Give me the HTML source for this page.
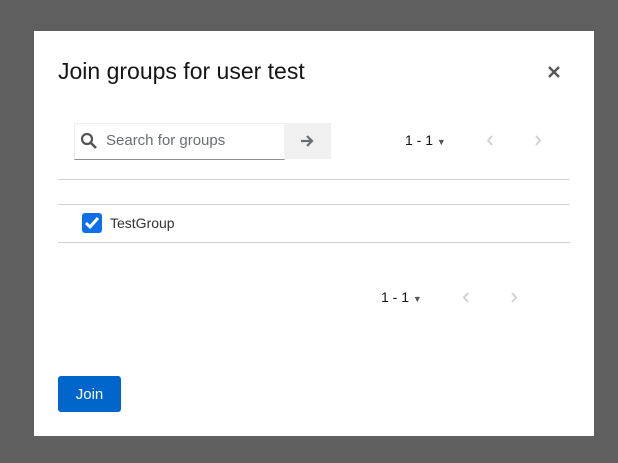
<!DOCTYPE html><html><head><style>
body{margin:0;width:618px;height:463px;background:#5f5f5f;font-family:"Liberation Sans",sans-serif;position:relative;overflow:hidden}
.m{position:absolute;left:34px;top:31px;width:560px;height:405px;background:#fff}
.a{position:absolute}
</style></head><body><div class="m">
<div class="a" style="left:24px;top:27px;font-size:23px;color:#151515">Join groups for user test</div>
<svg class="a" style="left:514px;top:35px" width="12" height="12" viewBox="0 0 12 12"><path d="M1 1l10 10M11 1L1 11" stroke="#555" stroke-width="2.4"/></svg>
<div class="a" style="left:40px;top:92px;width:209px;height:35px;border:1px solid #eee;border-bottom:1px solid #8a8d90"></div>
<svg class="a" style="left:46px;top:101px" width="18" height="18" viewBox="0 0 18 18"><circle cx="7" cy="7" r="5" fill="none" stroke="#555" stroke-width="2.2"/><path d="M11 11l5 5" stroke="#555" stroke-width="2.6"/></svg>
<div class="a" style="left:72px;top:101px;font-size:15px;color:#6a6e73">Search for groups</div>
<div class="a" style="left:250px;top:92px;width:47px;height:36px;background:#f0f0f0"></div>
<svg class="a" style="left:265px;top:102px" width="16" height="16" viewBox="0 0 16 16"><path d="M2 8h11M8 3l5 5-5 5" fill="none" stroke="#6a6e73" stroke-width="2.2"/></svg>
<div class="a" style="left:371px;top:101px;font-size:14px;color:#151515">1 - 1 <span style="font-size:9px;color:#555">▼</span></div>
<svg class="a" style="left:452px;top:104px" width="8" height="11" viewBox="0 0 8 11"><path d="M6 1L2 5.5 6 10" fill="none" stroke="#d2d2d2" stroke-width="2"/></svg>
<svg class="a" style="left:500px;top:104px" width="8" height="11" viewBox="0 0 8 11"><path d="M2 1l4 4.5L2 10" fill="none" stroke="#d2d2d2" stroke-width="2"/></svg>
<div class="a" style="left:24px;top:148px;width:512px;height:1px;background:#d2d2d2"></div>
<div class="a" style="left:24px;top:173px;width:512px;height:1px;background:#d2d2d2"></div>
<div class="a" style="left:48px;top:182px;width:20px;height:20px;background:#0f6fe6;border-radius:3px"></div>
<svg class="a" style="left:50px;top:185px" width="16" height="14" viewBox="0 0 16 14"><path d="M2 7l4 4 8-9" fill="none" stroke="#fff" stroke-width="3"/></svg>
<div class="a" style="left:76px;top:184px;font-size:14px;color:#333">TestGroup</div>
<div class="a" style="left:24px;top:211px;width:512px;height:1px;background:#d2d2d2"></div>
<div class="a" style="left:347px;top:258px;font-size:14px;color:#151515">1 - 1 <span style="font-size:9px;color:#555">▼</span></div>
<svg class="a" style="left:428px;top:261px" width="8" height="11" viewBox="0 0 8 11"><path d="M6 1L2 5.5 6 10" fill="none" stroke="#d2d2d2" stroke-width="2"/></svg>
<svg class="a" style="left:476px;top:261px" width="8" height="11" viewBox="0 0 8 11"><path d="M2 1l4 4.5L2 10" fill="none" stroke="#d2d2d2" stroke-width="2"/></svg>
<div class="a" style="left:24px;top:345px;width:63px;height:36px;background:#0066cc;border-radius:3px;color:#fff;font-size:15px;text-align:center;line-height:37px">Join</div>
</div></body></html>
